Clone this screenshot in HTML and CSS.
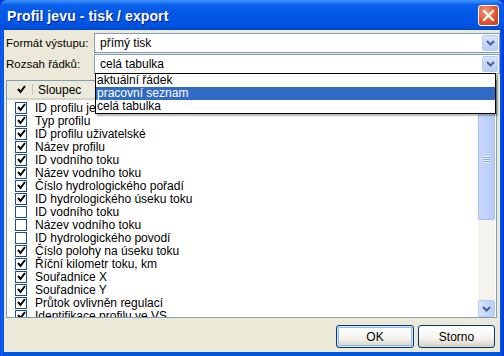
FILE: index.html
```html
<!DOCTYPE html>
<html>
<head>
	<title>Profil jevu - tisk / export</title>
	<link rel="stylesheet" href="styles.css">
</head>
<body>
	<div class="window">
		<div class="titlebar">
			<span class="title">Profil jevu - tisk / export</span>
			<span class="close-btn">
				<svg width="13" height="13" viewBox="0 0 13 13"><path d="M2 2 L11 11 M11 2 L2 11" stroke="#fff" stroke-width="2.2" stroke-linecap="square"/></svg>
			</span>
		</div>
		<div class="content">
			<div class="form-row">
				<label>Formát výstupu:</label>
				<div class="combo">
					<span class="combo-value">přímý tisk</span>
					<span class="combo-btn"><svg width="9" height="6" viewBox="0 0 9 6"><path d="M1 1 L4.5 4.5 L8 1" fill="none" stroke="#4D6185" stroke-width="2"/></svg></span>
				</div>
			</div>
			<div class="form-row">
				<label>Rozsah řádků:</label>
				<div class="combo">
					<span class="combo-value">celá tabulka</span>
					<span class="combo-btn"><svg width="9" height="6" viewBox="0 0 9 6"><path d="M1 1 L4.5 4.5 L8 1" fill="none" stroke="#4D6185" stroke-width="2"/></svg></span>
				</div>
			</div>

			<div class="listview">
				<div class="list-main">
					<div class="list-header">
						<div class="hdr-check">
							<svg width="9" height="9" viewBox="0 0 9 9"><path d="M1 4 L3.5 7 L8 1" fill="none" stroke="#000" stroke-width="2"/></svg>
						</div>
						<div class="hdr-col">Sloupec</div>
						<div class="hdr-rest"></div>
					</div>
					<div class="list-body" id="list-body"></div>
				</div>
				<div class="scrollbar">
					<div class="sb-arrow"></div>
					<div class="sb-thumb"><span class="grip"></span></div>
					<div class="sb-track"></div>
					<div class="sb-arrow">
						<svg width="9" height="6" viewBox="0 0 9 6"><path d="M1 1 L4.5 4.5 L8 1" fill="none" stroke="#4D6185" stroke-width="2"/></svg>
					</div>
				</div>
			</div>

			<div class="buttons">
				<button class="btn default">OK</button>
				<button class="btn">Storno</button>
			</div>

			<ul class="dropdown">
				<li>aktuální řádek</li>
				<li class="selected">pracovní seznam</li>
				<li>celá tabulka</li>
			</ul>
		</div>
	</div>
	<script>
		const columns = [
			['ID profilu jevu', true],
			['Typ profilu', true],
			['ID profilu uživatelské', true],
			['Název profilu', true],
			['ID vodního toku', true],
			['Název vodního toku', true],
			['Číslo hydrologického pořadí', true],
			['ID hydrologického úseku toku', true],
			['ID vodního toku', false],
			['Název vodního toku', false],
			['ID hydrologického povodí', false],
			['Číslo polohy na úseku toku', true],
			['Říční kilometr toku, km', true],
			['Souřadnice X', true],
			['Souřadnice Y', true],
			['Průtok ovlivněn regulací', true],
			['Identifikace profilu ve VS', true]
		];
		const body = document.getElementById('list-body');
		const tick = '<svg width="9" height="9" viewBox="0 0 9 9"><path d="M1 4 L3.5 7 L8 1" fill="none" stroke="#000" stroke-width="2"/></svg>';
		columns.forEach(([name, checked]) => {
			const row = document.createElement('div');
			row.className = 'list-row';
			row.innerHTML = '<span class="checkbox">' + (checked ? tick : '') + '</span><span class="row-text"></span>';
			row.querySelector('.row-text').textContent = name;
			body.appendChild(row);
		});
	</script>
</body>
</html>
```

FILE: styles.css
```css
* {
	box-sizing: border-box;
}

body {
	margin: 0;
	font-family: 'Liberation Sans', Arial, sans-serif;
	font-size: 11.5px;
	color: #000;
	background: #0831D9;
}

.window {
	width: 504px;
	height: 356px;
	display: flex;
	flex-direction: column;
	background: linear-gradient(to right, #0831D9 0, #166AEE 1px, #0055E5 3px, #0055E5 calc(100% - 3px), #0831D9 100%);
	border-radius: 7px 7px 0 0;
	padding: 0 4px 4px 4px;
}

.titlebar {
	height: 30px;
	margin: 0 -4px;
	padding: 0 5px 0 7px;
	display: flex;
	align-items: center;
	justify-content: space-between;
	border-radius: 7px 7px 0 0;
	background: linear-gradient(#3D95FF 0, #2A7FF7 2px, #0A5FEA 5px, #0058E6 14px, #0055E5 22px, #0050DD 27px, #0046C8 30px);
}

.title {
	color: #fff;
	font-size: 14px;
	font-weight: bold;
	text-shadow: 1px 1px 0 #0A1E8C;
	letter-spacing: 0.1px;
	margin-top: 1px;
}

.close-btn {
	width: 21px;
	height: 21px;
	display: flex;
	align-items: center;
	justify-content: center;
	border: 1px solid #fff;
	border-radius: 3px;
	background: radial-gradient(circle at 35% 30%, #F39A7A 0, #E2552D 55%, #C23A14 100%);
	margin-top: 1px;
}

.content {
	flex: 1;
	position: relative;
	background: #ECE9D8;
	padding: 3px 0 4px 2px;
	display: flex;
	flex-direction: column;
}

.form-row {
	display: grid;
	grid-template-columns: 88px 1fr;
	align-items: center;
	height: 20px;
	margin-bottom: 1px;
}

.form-row label {
	white-space: nowrap;
}

.combo {
	height: 20px;
	border: 1px solid #7F9DB9;
	background: #fff;
	display: flex;
	align-items: center;
	justify-content: space-between;
	padding: 0 1px 0 5px;
}

.combo-value {
	font-size: 12px;
}

.combo-btn {
	width: 16px;
	height: 16px;
	border: 1px solid #B9CBF3;
	border-radius: 2px;
	background: linear-gradient(#D6E3FD, #B7CCF7);
	display: flex;
	align-items: center;
	justify-content: center;
}

.listview {
	margin-top: 5px;
	margin-right: 3px;
	height: 238px;
	border: 1px solid #7F9DB9;
	background: #fff;
	display: flex;
	overflow: hidden;
}

.list-main {
	flex: 1;
	display: flex;
	flex-direction: column;
	overflow: hidden;
}

.list-header {
	height: 19px;
	flex-shrink: 0;
	display: flex;
	background: #EBEADB;
	border-bottom: 2px solid #D6D3C6;
	font-size: 12px;
}

.hdr-check {
	width: 26px;
	display: flex;
	align-items: center;
	justify-content: center;
	padding-left: 4px;
	border-right: 1px solid #C7C5B2;
	margin: 3px 0;
}

.hdr-col {
	width: 180px;
	padding-left: 5px;
	display: flex;
	align-items: center;
}

.hdr-rest {
	flex: 1;
}

.list-body {
	padding-top: 1px;
}

.list-row {
	height: 13px;
	display: flex;
	align-items: center;
	font-size: 12px;
	white-space: nowrap;
}

.checkbox {
	width: 12px;
	height: 12px;
	margin: 0 8px 0 8px;
	border: 1px solid #1C5180;
	background: #fff;
	display: flex;
	align-items: center;
	justify-content: center;
}

.scrollbar {
	width: 17px;
	display: flex;
	flex-direction: column;
	background: #F4F3EE;
	margin-right: 1px;
}

.sb-arrow {
	height: 17px;
	border: 1px solid #B9CBF3;
	border-radius: 2px;
	background: linear-gradient(to right, #D6E3FD, #B7CCF7);
	display: flex;
	align-items: center;
	justify-content: center;
}

.sb-thumb {
	height: 122px;
	border: 1px solid #A6BEF3;
	border-radius: 2px;
	background: linear-gradient(to right, #C9D8FC, #B5CAF8);
	display: flex;
	align-items: center;
	justify-content: center;
}

.grip {
	width: 7px;
	height: 7px;
	background: repeating-linear-gradient(#EEF3FE 0, #EEF3FE 1px, #8CA8E6 1px, #8CA8E6 2px);
}

.sb-track {
	flex: 1;
}

.buttons {
	margin-top: 7px;
	display: flex;
	justify-content: flex-end;
	gap: 4px;
	padding-right: 5px;
}

.btn {
	font-family: 'Liberation Sans', Arial, sans-serif;
	font-size: 12px;
	height: 23px;
	border: 1px solid #003C74;
	border-radius: 3px;
	background: linear-gradient(#FFFFFF, #F4F3EE 60%, #D6D0C5);
	color: #000;
	padding: 0;
}

.btn.default {
	width: 78px;
	box-shadow: inset 0 0 0 1px #CEE7FF, inset 0 0 0 2px #98B8EA;
}

.btn:not(.default) {
	width: 77px;
}

.dropdown {
	position: absolute;
	top: 43px;
	left: 91px;
	width: 401px;
	margin: 0;
	padding: 0;
	list-style: none;
	background: #fff;
	border: 1px solid #000;
	box-shadow: 2px 2px 1px rgba(0, 0, 0, 0.25);
	font-size: 12px;
}

.dropdown li {
	height: 13px;
	line-height: 13px;
	padding-left: 1px;
}

.dropdown li.selected {
	background: #316AC5;
	color: #fff;
}
```
